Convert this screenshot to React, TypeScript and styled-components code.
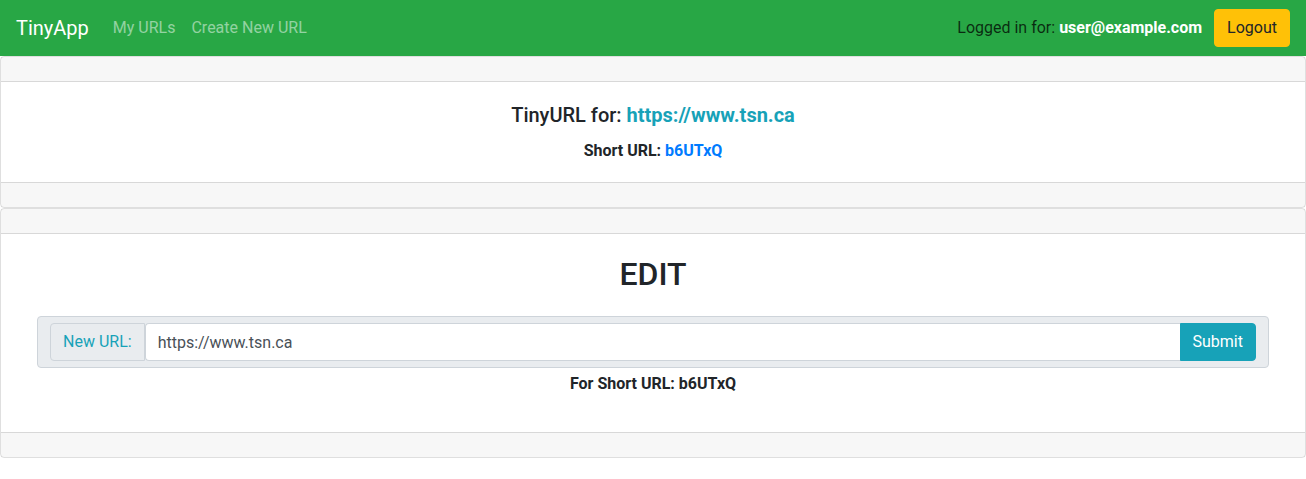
import React from "react";
import styled, { createGlobalStyle } from "styled-components";

const Global = createGlobalStyle`
  * { box-sizing: border-box; }
  body {
    margin: 0;
    font-family: Roboto, "Liberation Sans", Arial, sans-serif;
    font-size: 16px;
    line-height: 1.5;
    color: #212529;
    background: #fff;
  }
`;

const Navbar = styled.nav`
  height: 56px;
  background: #28a745;
  display: flex;
  align-items: center;
  padding: 8px 16px;
`;

const Brand = styled.a`
  font-size: 20px;
  line-height: 30px;
  color: #fff;
  margin-right: 16px;
  text-decoration: none;
`;

const NavLink = styled.a`
  padding: 8px;
  color: rgba(255, 255, 255, 0.5);
  text-decoration: none;
`;

const Spacer = styled.div`
  flex: 1;
`;

const NavText = styled.span`
  color: rgba(0, 0, 0, 0.75);
  margin-right: 12px;
`;

const Email = styled.b`
  color: #fff;
  font-weight: 700;
`;

const Button = styled.button<{ $variant: "warning" | "info" }>`
  font-family: inherit;
  font-size: 16px;
  line-height: 24px;
  padding: 6px 12px;
  border: 1px solid ${(p) => (p.$variant === "warning" ? "#ffc107" : "#17a2b8")};
  background: ${(p) => (p.$variant === "warning" ? "#ffc107" : "#17a2b8")};
  color: ${(p) => (p.$variant === "warning" ? "#212529" : "#fff")};
  border-radius: ${(p) => (p.$variant === "warning" ? "4px" : "0 4px 4px 0")};
  cursor: pointer;
`;

const Card = styled.section`
  border: 1px solid rgba(0, 0, 0, 0.125);
  border-radius: 4px;
  display: flex;
  flex-direction: column;
`;

const CardCap = styled.div<{ $pos: "top" | "bottom" }>`
  height: 25px;
  background: rgba(0, 0, 0, 0.03);
  ${(p) =>
    p.$pos === "top"
      ? "border-bottom: 1px solid rgba(0,0,0,0.125);"
      : "border-top: 1px solid rgba(0,0,0,0.125);"}
`;

const CardBody = styled.div<{ $shift?: number }>`
  padding: ${(p) => 20 + (p.$shift ?? 0)}px 20px ${(p) => 20 - (p.$shift ?? 0)}px;
  text-align: center;
`;

const H5 = styled.h5`
  font-size: 20px;
  font-weight: 500;
  line-height: 1.2;
  margin: 0 0 12px;
`;

const H2 = styled.h2`
  font-size: 32px;
  font-weight: 500;
  line-height: 1.2;
  margin: 1px 0 0;
`;

const InfoLink = styled.a`
  color: #17a2b8;
  font-weight: 700;
  text-decoration: none;
`;

const Text = styled.p<{ $mb: number }>`
  margin: 0 0 ${(p) => p.$mb}px;
  font-weight: 700;
`;

const BlueLink = styled.a`
  color: #007bff;
  text-decoration: none;
`;

const FormBox = styled.form`
  margin: 23px 16px 4px;
  background: #e9ecef;
  border: 1px solid #ced4da;
  border-radius: 4px;
  padding: 6px 12px;
  display: flex;
`;

const Prepend = styled.label`
  padding: 6px 12px;
  line-height: 24px;
  color: #17a2b8;
  background: #e9ecef;
  border: 1px solid #ced4da;
  border-radius: 4px 0 0 4px;
  white-space: nowrap;
`;

const Input = styled.input`
  flex: 1;
  min-width: 0;
  font-family: inherit;
  font-size: 16px;
  line-height: 24px;
  height: 38px;
  padding: 6px 12px;
  color: #495057;
  background: #fff;
  border: 1px solid #ced4da;
  border-right: none;
  border-radius: 4px 0 0 4px;
  outline: none;
`;

export default function App() {
  return (
    <>
      <Global />
      <Navbar>
        <Brand href="#">TinyApp</Brand>
        <NavLink href="#">My URLs</NavLink>
        <NavLink href="#">Create New URL</NavLink>
        <Spacer />
        <NavText>
          Logged in for: <Email>user@example.com</Email>
        </NavText>
        <Button $variant="warning">Logout</Button>
      </Navbar>
      <Card>
        <CardCap $pos="top" />
        <CardBody $shift={1}>
          <H5>
            TinyURL for: <InfoLink href="#">https://www.tsn.ca</InfoLink>
          </H5>
          <Text $mb={0}>
            Short URL: <BlueLink href="#">b6UTxQ</BlueLink>
          </Text>
        </CardBody>
        <CardCap $pos="bottom" />
      </Card>
      <Card>
        <CardCap $pos="top" />
        <CardBody>
          <H2>EDIT</H2>
          <FormBox onSubmit={(e) => e.preventDefault()}>
            <Prepend>New URL:</Prepend>
            <Input defaultValue="https://www.tsn.ca" />
            <Button $variant="info" type="submit">
              Submit
            </Button>
          </FormBox>
          <Text $mb={16}>For Short URL: b6UTxQ</Text>
        </CardBody>
        <CardCap $pos="bottom" />
      </Card>
    </>
  );
}
